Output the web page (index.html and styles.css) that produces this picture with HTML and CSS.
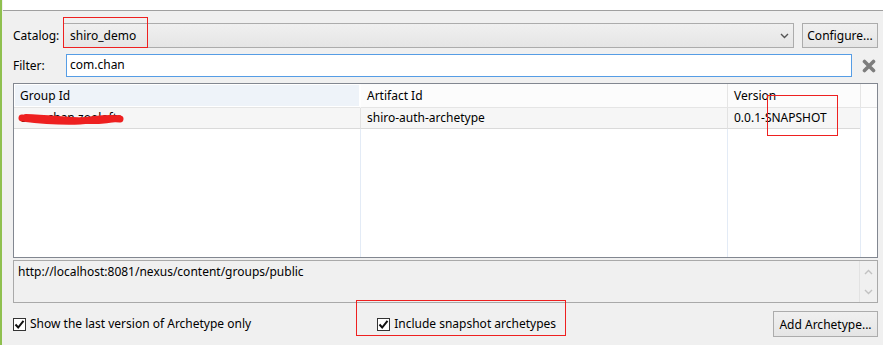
FILE: index.html
```html
<!DOCTYPE html>
<html lang="en">
<head>
    <meta charset="UTF-8">
    <meta name="viewport" content="width=device-width, initial-scale=1.0">
    <title>Select an Archetype</title>
    <link rel="stylesheet" href="styles.css">
</head>
<body>
    <div class="window">
        <div class="top-band"></div>

        <div class="panel">
            <div class="row row-catalog">
                <span class="label label-catalog">Catalog:</span>
                <div class="combo">
                    <span class="combo-text">shiro_demo</span>
                    <svg class="combo-arrow" width="9" height="6" viewBox="0 0 9 6">
                        <path d="M1 1 L4.5 4.5 L8 1" fill="none" stroke="#555" stroke-width="1.4"/>
                    </svg>
                    <div class="mark mark-catalog"></div>
                </div>
                <button class="btn btn-configure">Configure...</button>
            </div>

            <div class="row row-filter">
                <span class="label label-filter">Filter:</span>
                <div class="filter-input">com.chan</div>
                <svg class="clear-icon" width="14" height="14" viewBox="0 0 14 14">
                    <path d="M2.5 2.5 L11.5 11.5 M11.5 2.5 L2.5 11.5" stroke="#7d7d7d" stroke-width="3.6" stroke-linecap="round"/>
                </svg>
            </div>

            <div class="table">
                <div class="grid">
                    <div class="head head-hover">Group Id</div>
                    <div class="head">Artifact Id</div>
                    <div class="head">Version</div>
                    <div class="head head-filler"></div>

                    <div class="cell">com.chan.zooloft</div>
                    <div class="cell">shiro-auth-archetype</div>
                    <div class="cell">0.0.1-SNAPSHOT</div>
                    <div class="cell cell-filler"></div>

                    <div class="empty"></div>
                    <div class="empty"></div>
                    <div class="empty"></div>
                    <div class="empty empty-last"></div>
                </div>
                <svg class="scribble" width="108" height="14" viewBox="0 0 108 14">
                    <path d="M4 6 C 20 8, 40 10, 62 9 C 76 8, 88 5, 102 7" fill="none" stroke="#ee2020" stroke-width="7" stroke-linecap="round"/>
                    <path d="M8 5 C 30 6, 50 8, 72 9 C 84 9, 94 8, 101 6" fill="none" stroke="#ee2020" stroke-width="6" stroke-linecap="round"/>
                </svg>
                <div class="mark mark-version"></div>
            </div>

            <div class="description">
                <div class="description-text">http://localhost:8081/nexus/content/groups/public</div>
                <div class="scrollbar">
                    <svg width="9" height="6" viewBox="0 0 9 6"><path d="M1 5 L4.5 1.5 L8 5" fill="none" stroke="#c2c2c2" stroke-width="1.4"/></svg>
                    <svg width="9" height="6" viewBox="0 0 9 6"><path d="M1 1 L4.5 4.5 L8 1" fill="none" stroke="#c2c2c2" stroke-width="1.4"/></svg>
                </div>
            </div>

            <div class="row row-bottom">
                <label class="check">
                    <span class="box">
                        <svg width="11" height="11" viewBox="0 0 11 11"><path d="M1.5 5.5 L4.2 8.5 L9.5 1.8" fill="none" stroke="#111" stroke-width="2"/></svg>
                    </span>
                    Show the last version of Archetype only
                </label>
                <label class="check check-snapshot">
                    <span class="box">
                        <svg width="11" height="11" viewBox="0 0 11 11"><path d="M1.5 5.5 L4.2 8.5 L9.5 1.8" fill="none" stroke="#111" stroke-width="2"/></svg>
                    </span>
                    Include snapshot archetypes
                    <div class="mark mark-snapshot"></div>
                </label>
                <button class="btn btn-add">Add Archetype...</button>
            </div>
        </div>
    </div>
</body>
</html>
```

FILE: styles.css
```css
:root {
    --bg: #f0f0f0;
    --border: #acacac;
    --field-border: #828790;
    --focus: #569de5;
    --grid-line: #e3ebf6;
    --annotation: #ee2020;
}

body {
    margin: 0;
    padding: 0;
    font-family: 'Noto Sans', 'Liberation Sans', sans-serif;
    font-size: 12px;
    color: #000;
    background: var(--bg);
}

.window {
    width: 883px;
    height: 345px;
    border-left: 2px solid #8fc04f;
    box-sizing: border-box;
    background: var(--bg);
    overflow: hidden;
}

.top-band {
    height: 10px;
    background: #fff;
    border-bottom: 1px solid #a0a0a0;
    margin-left: 1px;
}

.panel {
    padding: 12px 5px 0 11px;
    display: flex;
    flex-direction: column;
}

.row {
    display: flex;
    align-items: center;
}

.label {
    line-height: 16px;
}

/* catalog row */
.row-catalog {
    height: 25px;
}

.label-catalog {
    width: 50px;
}

.combo {
    position: relative;
    flex: 1;
    height: 25px;
    box-sizing: border-box;
    border: 1px solid var(--border);
    background: linear-gradient(#f0f0f0, #e5e5e5);
    display: flex;
    align-items: center;
    justify-content: space-between;
    padding: 0 4px 0 6px;
}

.combo-text {
    line-height: 16px;
}

.btn {
    font-family: inherit;
    font-size: 12px;
    color: #000;
    border: 1px solid var(--border);
    background: linear-gradient(#f0f0f0, #e5e5e5);
    padding: 0;
    box-sizing: border-box;
}

.btn-configure {
    margin-left: 8px;
    width: 76px;
    height: 25px;
}

/* filter row */
.row-filter {
    margin-top: 6px;
    height: 23px;
}

.label-filter {
    width: 53px;
}

.filter-input {
    width: 786px;
    height: 23px;
    box-sizing: border-box;
    border: 1px solid var(--focus);
    background: #fff;
    padding: 0 3px;
    line-height: 20px;
}

.clear-icon {
    margin-left: 10px;
}

/* archetype table */
.table {
    position: relative;
    margin-top: 6px;
    height: 175px;
    box-sizing: border-box;
    border: 1px solid var(--field-border);
    background: #fff;
}

.grid {
    display: grid;
    grid-template-columns: 347px 367px 133px 1fr;
    grid-template-rows: 24px 21px 1fr;
    height: 100%;
}

.head {
    background: #fcfcfc;
    border-right: 1px solid #e5e5e5;
    border-bottom: 1px solid #e5e5e5;
    padding-left: 6px;
    line-height: 23px;
}

.head-hover {
    background: #eef3f9;
    border-right-color: #fff;
    box-shadow: inset 0 0 0 1px #fff;
}

.head-filler {
    border-right: none;
    border-left: 1px solid #e5e5e5;
    margin-left: -1px;
}

.cell {
    background: #f6f6f6;
    border-bottom: 1px solid #dadada;
    border-right: 1px solid #e2e2e2;
    padding-left: 6px;
    line-height: 20px;
}

.cell-filler {
    background: #fff;
    border-bottom: none;
    border-right: none;
    border-left: 1px solid var(--grid-line);
    margin-left: -1px;
}

.empty {
    border-right: 1px solid var(--grid-line);
}

.empty-last {
    border-right: none;
}

.scribble {
    position: absolute;
    left: 4px;
    top: 28px;
}

/* annotation boxes */
.mark {
    position: absolute;
    z-index: 2;
    box-sizing: border-box;
    border: 1px solid var(--annotation);
    pointer-events: none;
}

.mark-catalog {
    left: -1px;
    top: -7px;
    width: 85px;
    height: 31px;
}

.mark-version {
    left: 753px;
    top: 11px;
    width: 71px;
    height: 41px;
}

.mark-snapshot {
    left: -21px;
    top: -16px;
    width: 210px;
    height: 36px;
}

/* description */
.description {
    margin-top: 2px;
    height: 43px;
    box-sizing: border-box;
    border: 1px solid #a9a9a9;
    background: var(--bg);
    display: flex;
}

.description-text {
    flex: 1;
    padding: 3px 4px;
    line-height: 16px;
}

.scrollbar {
    width: 17px;
    border-left: 1px solid #e2e2e2;
    display: flex;
    flex-direction: column;
    justify-content: space-between;
    align-items: center;
    padding: 8px 0 7px;
}

/* bottom row */
.row-bottom {
    margin-top: 8px;
    height: 26px;
}

.check {
    position: relative;
    display: flex;
    align-items: center;
    line-height: 16px;
}

.box {
    width: 13px;
    height: 13px;
    box-sizing: border-box;
    border: 1px solid #333;
    background: #fff;
    display: flex;
    align-items: center;
    justify-content: center;
    margin-right: 4px;
}

.check-snapshot {
    margin-left: 126px;
}

.btn-add {
    margin-left: auto;
    width: 105px;
    height: 26px;
}
```
